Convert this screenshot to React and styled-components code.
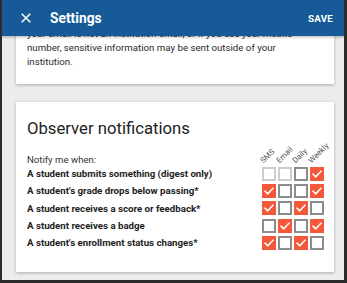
import React from "react";
import styled, { createGlobalStyle } from "styled-components";

const Global = createGlobalStyle`
  html, body { margin: 0; padding: 0; background: #2b2b2b; }
  body { font-family: Roboto, "Liberation Sans", sans-serif; }
  * { box-sizing: border-box; }
`;

const Frame = styled.div`
  width: 347px;
  height: 283px;
  overflow: hidden;
  background: #ececec;
  border-left: 2px solid #2b2b2b;
  border-right: 3px solid #2b2b2b;
  border-bottom: 3px solid #2b2b2b;
  display: flex;
  flex-direction: column;
`;

const Header = styled.header`
  position: relative;
  z-index: 2;
  flex: 0 0 36px;
  background: #165b97;
  color: #fff;
  display: flex;
  align-items: center;
  padding: 0 11px 0 18px;
  box-shadow: 0 1px 3px rgba(0, 0, 0, 0.3);
`;

const CloseButton = styled.button`
  background: none;
  border: 0;
  padding: 0;
  width: 12px;
  height: 12px;
  display: flex;
  align-items: center;
  justify-content: center;
  color: #fff;
`;

const Title = styled.h1`
  margin: 0 0 0 18px;
  font-size: 13.8px;
  font-weight: 700;
  flex: 1;
`;

const SaveButton = styled.button`
  background: none;
  border: 0;
  padding: 0;
  color: #fff;
  font-family: inherit;
  font-size: 9.8px;
  font-weight: 700;
  letter-spacing: 0.2px;
`;

const Scroller = styled.div`
  flex: 1;
  overflow: hidden;
`;

const Content = styled.main`
  display: flex;
  flex-direction: column;
  gap: 18px;
  margin-top: -25px;
  padding: 0 10px 0 14px;
`;

const Card = styled.section`
  background: #fff;
  box-shadow: 0 1px 3px rgba(0, 0, 0, 0.28);
  padding: ${(p) => p.$pad};
`;

const Paragraph = styled.p`
  margin: 0;
  font-size: 9.7px;
  line-height: 14px;
  color: #2a2a2a;
`;

const CardTitle = styled.h2`
  margin: 0 0 15px;
  font-size: 16.7px;
  line-height: 22px;
  font-weight: 400;
  color: #222;
`;

const Table = styled.div`
  display: grid;
  grid-template-columns: 1fr repeat(4, 14px);
  column-gap: 2px;
  align-items: center;
`;

const NotifyLabel = styled.div`
  font-size: 9.6px;
  line-height: 10px;
  color: #333;
  height: 10px;
`;

const ColHead = styled.div`
  height: 10px;
`;

const ColText = styled.span`
  display: block;
  white-space: nowrap;
  font-size: 7.8px;
  line-height: 8px;
  color: #555;
  transform-origin: left bottom;
  transform: translate(3px, 2px) rotate(-45deg);
`;

const RowLabel = styled.div`
  font-size: 9.7px;
  font-weight: 700;
  color: #222;
  height: 17.33px;
  line-height: 17.33px;
  white-space: nowrap;
`;

const Box = styled.span`
  width: 14px;
  height: 14px;
  display: flex;
  align-items: center;
  justify-content: center;
  background: ${(p) => (p.$on ? "#f4583b" : "#fff")};
  border: ${(p) =>
    p.$on ? "none" : `2px solid ${p.$faint ? "#cdcdcd" : "#8c8c8c"}`};
`;

const Check = () => (
  <svg width="10" height="8" viewBox="0 0 10 8" fill="none">
    <path d="M1 4.2 L3.8 6.8 L9 1.2" stroke="#fff" strokeWidth="1.6" strokeLinecap="round" strokeLinejoin="round" />
  </svg>
);

const rows = [
  { label: "A student submits something (digest only)", v: [0, 0, 0, 1], faint: [1, 1, 0, 0] },
  { label: "A student's grade drops below passing*", v: [1, 0, 0, 1] },
  { label: "A student receives a score or feedback*", v: [1, 0, 1, 0] },
  { label: "A student receives a badge", v: [0, 1, 0, 1] },
  { label: "A student's enrollment status changes*", v: [1, 0, 1, 0] },
];

const cols = ["SMS", "Email", "Daily", "Weekly"];

export default function App() {
  return (
    <>
      <Global />
      <Frame>
        <Header>
          <CloseButton aria-label="Close">
            <svg width="10" height="10" viewBox="0 0 10 10">
              <path d="M0.7 0.7 L9.3 9.3 M9.3 0.7 L0.7 9.3" stroke="#fff" strokeWidth="1.5" />
            </svg>
          </CloseButton>
          <Title>Settings</Title>
          <SaveButton>SAVE</SaveButton>
        </Header>
        <Scroller>
          <Content>
            <Card $pad="16px 11px 15px">
              <Paragraph>
                your email is not an institution email, or if you use your mobile
                <br />
                number, sensitive information may be sent outside of your
                <br />
                institution.
              </Paragraph>
            </Card>
            <Card $pad="16px 10px 20px 11px">
              <CardTitle>Observer notifications</CardTitle>
              <Table>
                <NotifyLabel>Notify me when:</NotifyLabel>
                {cols.map((c) => (
                  <ColHead key={c}>
                    <ColText>{c}</ColText>
                  </ColHead>
                ))}
                {rows.map((r) => (
                  <React.Fragment key={r.label}>
                    <RowLabel>{r.label}</RowLabel>
                    {r.v.map((on, i) => (
                      <Box key={i} $on={!!on} $faint={r.faint ? !!r.faint[i] : false}>
                        {on ? <Check /> : null}
                      </Box>
                    ))}
                  </React.Fragment>
                ))}
              </Table>
            </Card>
          </Content>
        </Scroller>
      </Frame>
    </>
  );
}
